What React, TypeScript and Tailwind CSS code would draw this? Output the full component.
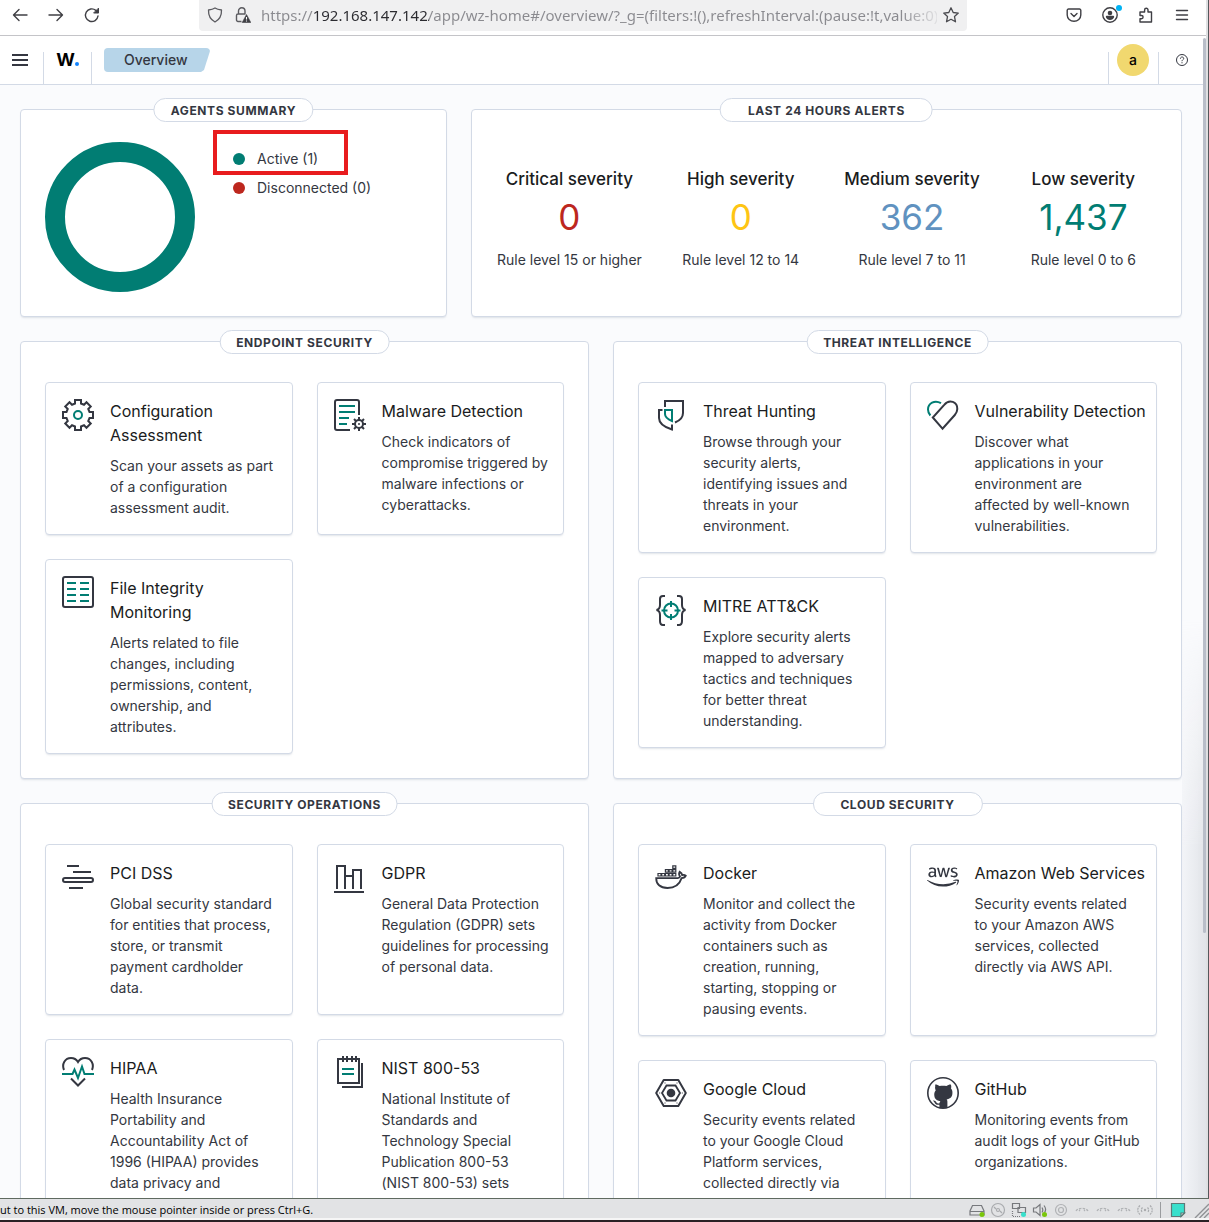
import React from "react";
import type { ReactNode } from "react";
import { FaAws } from "react-icons/fa";

const INK = "#343741";
const TEAL = "#017d73";

/* ---------- icons ---------- */

function gearPath(cx: number, cy: number, outer: number, inner: number, half: number) {
  const points: string[] = [];
  for (let i = 0; i < 8; i++) {
    const a = (i * Math.PI) / 4;
    const tooth = [
      [-half, -inner],
      [-half, -outer],
      [half, -outer],
      [half, -inner],
    ];
    for (const [x, y] of tooth) {
      const px = cx + x * Math.cos(a) - y * Math.sin(a);
      const py = cy + x * Math.sin(a) + y * Math.cos(a);
      points.push(`${px.toFixed(2)} ${py.toFixed(2)}`);
    }
  }
  return `M${points.join("L")}Z`;
}

function Icon({ children }: { children: ReactNode }) {
  return (
    <svg className="size-8 shrink-0" viewBox="0 0 32 32" fill="none" stroke={INK} strokeWidth="2" aria-hidden="true">
      {children}
    </svg>
  );
}

const GearIcon = () => (
  <Icon>
    <path d={gearPath(16, 16, 15, 11.5, 3)} />
    <circle cx="16" cy="16" r="4" stroke={TEAL} />
  </Icon>
);

const MalwareIcon = () => (
  <Icon>
    <path d="M25 16V3a2 2 0 0 0-2-2H3a2 2 0 0 0-2 2v26a2 2 0 0 0 2 2h13" />
    <path d="M5 7h16M5 13h16M5 19h10M5 25h8" stroke={TEAL} />
    <circle cx="25" cy="25" r="4" />
    <path d="M25 18v3M25 29v3M18 25h3M29 25h3M20 20l2.200 2.200M27.800 27.800L30 30M30 20l-2.200 2.200M22.200 27.800L20 30" />
    <circle cx="25" cy="25" r="1" fill={INK} stroke="none" />
  </Icon>
);

const FileIcon = () => (
  <Icon>
    <rect x="1" y="1" width="30" height="30" rx="2" />
    <path d="M5 7h9M18 7h9M5 13h9M18 13h9M5 19h9M18 19h9M5 25h9M18 25h9" stroke={TEAL} />
  </Icon>
);

const HuntIcon = () => (
  <Icon>
    <path d="M10 8V2h18v12c0 5-3 7.500-8 9.500" />
    <path d="M7.500 11H4v8c0 6 6.500 9.500 13 11.500V25.500" />
    <path d="M10 11h7v11c-4.500-1.800-7-3.600-7-7z" stroke={TEAL} />
  </Icon>
);

const HeartIcon = () => (
  <Icon>
    <path d="M15.500 29.700L5.800 18.500 17.200 5.800C22.500-.5 30.500 3 30.300 10c-.1 2.600-1 4.300-2.500 6z" />
    <path d="M14 4.200C7.500.5 1 4.500 1 10.500c0 2.200.8 4.200 2.400 6" stroke={TEAL} />
  </Icon>
);

const MitreIcon = () => (
  <Icon>
    <path d="M10 2H8C6 2 5 3 5 5v6c0 3-1 4.500-3.500 5C4 16.500 5 18 5 21v6c0 2 1 4 3 4h2" />
    <path d="M22 2h2c2 0 3 1 3 3v6c0 3 1 4.500 3.500 5C28 16.500 27 18 27 21v6c0 2-1 4-3 4h-2" />
    <circle cx="16" cy="16.500" r="7" stroke={TEAL} />
    <path d="M16 7v6M16 20v6M6.500 16.500h6M19.500 16.500h6" stroke={TEAL} />
  </Icon>
);

const PciIcon = () => (
  <Icon>
    <path d="M5 5h12M11 11h18M7 27h14" />
    <rect x="1" y="17" width="30" height="4" rx="2" />
  </Icon>
);

const GdprIcon = () => (
  <Icon>
    <path d="M3 28V5h8v23M11 15h8M19 28V9h8v19M0 31h30" />
  </Icon>
);

const HipaaIcon = () => (
  <Icon>
    <path d="M2 14C-.5 8 3 2 9 2c3 0 5.500 1.500 7 4 1.500-2.500 4-4 7-4 6 0 9.500 6 7 12M9 22.500l7 7 7-7" />
    <path d="M0 18h10.500l2-4.500 3.500 8.500 4-11.500 2.500 7.500H32" stroke={TEAL} />
  </Icon>
);

const NistIcon = () => (
  <Icon>
    <path d="M4 3h21v24H4zM9 0v6M13 0v6M18 0v6M22 0v6M28 7v24H8" />
    <path d="M8 13h12M8 18h12" stroke={TEAL} />
  </Icon>
);

const DockerIcon = () => (
  <Icon>
    <path
      d="M1.200 17.200h21.500c1.300-.2 2-.9 2.300-1.700-1.100-1.500-1.200-3.300-.3-4.800 1.600.8 2.400 2 2.500 3.400 1.400-.3 2.700-.1 3.600.6-.6 1.500-2 2.300-4.200 2.400C24.500 23.500 20 27 12.500 27 5 27 1.200 23 1.200 17.200z"
      strokeWidth="1.800"
    />
    <path
      d="M3 12.500h3V15H3zM6.700 12.500h3V15h-3zM10.400 12.500h3V15h-3zM14.100 12.500h3V15h-3zM17.800 12.500h3V15h-3zM10.400 8.700h3v2.500h-3zM14.100 8.700h3v2.500h-3zM17.800 8.700h3v2.500h-3zM17.800 4.900h3v2.500h-3z"
      strokeWidth="1.200"
    />
  </Icon>
);

const AwsIcon = () => <FaAws className="size-8 shrink-0 text-[#343741]" aria-hidden="true" />;

const GoogleCloudIcon = () => (
  <Icon>
    <path d="M8.700 3h14.600L30.800 16l-7.500 13H8.700L1.200 16z" strokeLinejoin="round" />
    <path d="M11.500 8.500h9L25 16l-4.500 7.500h-9L7 16z" strokeWidth="1.800" />
    <circle cx="16" cy="16" r="4.300" fill={INK} stroke="none" />
    <path d="M10 5.500v1M22 5.500v1M4.200 16h1M26.800 16h1M10 25.500v1M22 25.500v1" strokeWidth="1" />
  </Icon>
);

const GithubIcon = () => (
  <Icon>
    <circle cx="16" cy="16" r="15.200" strokeWidth="1.600" />
    <path
      d="M8.200 7.400c1.700 0 3.200.7 4.400 1.600 2.100-.5 4.700-.5 6.800 0 1.200-.9 2.700-1.600 4.400-1.600.6 1.400.6 2.800.2 4 1.200 1.300 1.600 3 1.400 5-.3 4-2.500 5.400-5.800 5.900.6.7.8 1.500.8 2.700V31h-8v-3.300c-2.800.5-4-.4-4.900-2.300-.4-.8-.9-1.300-1.500-1.700 1.600-.4 2.600.5 3.300 1.600.8 1.200 1.700 1.400 3.200 1 .1-1.100.4-1.700.9-2.200-3.300-.5-5.800-2-6.100-5.700-.2-2 .2-3.700 1.400-5-.4-1.200-.9-2.600-.5-4z"
      fill={INK}
      stroke="none"
    />
  </Icon>
);

/* ---------- data ---------- */

type Module = { title: string; text: string; icon: () => ReactNode };

const sections: { title: string; modules: Module[] }[] = [
  {
    title: "Endpoint security",
    modules: [
      { title: "Configuration Assessment", text: "Scan your assets as part of a configuration assessment audit.", icon: GearIcon },
      { title: "Malware Detection", text: "Check indicators of compromise triggered by malware infections or cyberattacks.", icon: MalwareIcon },
      { title: "File Integrity Monitoring", text: "Alerts related to file changes, including permissions, content, ownership, and attributes.", icon: FileIcon },
    ],
  },
  {
    title: "Threat intelligence",
    modules: [
      { title: "Threat Hunting", text: "Browse through your security alerts, identifying issues and threats in your environment.", icon: HuntIcon },
      { title: "Vulnerability Detection", text: "Discover what applications in your environment are affected\u00a0by well-known vulnerabilities.", icon: HeartIcon },
      { title: "MITRE ATT&CK", text: "Explore security alerts mapped to adversary tactics and techniques for better threat understanding.", icon: MitreIcon },
    ],
  },
  {
    title: "Security operations",
    modules: [
      { title: "PCI DSS", text: "Global security standard for entities that process, store, or transmit payment cardholder data.", icon: PciIcon },
      { title: "GDPR", text: "General Data Protection Regulation (GDPR) sets guidelines for processing of personal data.", icon: GdprIcon },
      { title: "HIPAA", text: "Health Insurance Portability and Accountability Act of 1996 (HIPAA) provides data privacy and", icon: HipaaIcon },
      { title: "NIST 800-53", text: "National Institute of Standards and Technology Special Publication 800-53 (NIST\u00a0800-53) sets", icon: NistIcon },
    ],
  },
  {
    title: "Cloud security",
    modules: [
      { title: "Docker", text: "Monitor and collect the activity from Docker containers such as creation, running, starting, stopping or pausing events.", icon: DockerIcon },
      { title: "Amazon Web Services", text: "Security events related to\u00a0your Amazon AWS services, collected directly via AWS API.", icon: AwsIcon },
      { title: "Google Cloud", text: "Security events related to\u00a0your Google Cloud Platform services, collected directly via", icon: GoogleCloudIcon },
      { title: "GitHub", text: "Monitoring events from audit logs of your GitHub organizations.", icon: GithubIcon },
    ],
  },
];

const severities = [
  { name: "Critical severity", count: "0", rule: "Rule level 15 or higher", color: "text-[#bd271e]" },
  { name: "High severity", count: "0", rule: "Rule level 12 to 14", color: "text-[#fec514]" },
  { name: "Medium severity", count: "362", rule: "Rule level 7 to 11", color: "text-[#6092c0]" },
  { name: "Low severity", count: "1,437", rule: "Rule level 0 to 6", color: "text-[#017d73]" },
];

/* ---------- building blocks ---------- */

function Panel({ title, className, children }: { title: string; className: string; children: ReactNode }) {
  return (
    <section className={`relative min-w-0 rounded border border-[#d3dae6] bg-white shadow-[0_2px_2px_-1px_rgba(152,162,179,0.3)] ${className}`}>
      <h2 className="absolute top-0 left-1/2 flex h-6 min-w-[30%] -translate-x-1/2 -translate-y-1/2 items-center justify-center rounded-full border border-[#d3dae6] bg-white px-4 pt-0.5 text-xs font-bold tracking-wider whitespace-nowrap uppercase">
        {title}
      </h2>
      {children}
    </section>
  );
}

function ModuleCard({ module }: { module: Module }) {
  const Glyph = module.icon;
  return (
    <a
      href="#module"
      className="flex gap-4 rounded border border-[#d3dae6] bg-white py-4 pr-2 pl-4 shadow-[0_2px_2px_-1px_rgba(152,162,179,0.3)]"
    >
      <Glyph />
      <div className="min-w-0 flex-1">
        <h3 className="text-base leading-6 text-[#1a1c21]">{module.title}</h3>
        <p className="mt-2 pr-1 text-sm leading-[21px]">{module.text}</p>
      </div>
    </a>
  );
}

/* ---------- browser toolbar ---------- */

function ToolButton({ label, children }: { label: string; children: ReactNode }) {
  return (
    <button type="button" aria-label={label} className="shrink-0">
      <svg className="size-4" viewBox="0 0 16 16" fill="none" stroke="#3f3f44" strokeWidth="1.400" strokeLinecap="round" strokeLinejoin="round">
        {children}
      </svg>
    </button>
  );
}

function BrowserToolbar() {
  return (
    <div className="flex h-9 shrink-0 border-b border-[#c4c4c8] bg-white">
      <div className="flex h-[30px] w-[199px] shrink-0 items-center gap-5 pl-3">
        <ToolButton label="Back">
          <path d="M15 8H1.500M7 2.500L1.500 8 7 13.500" />
        </ToolButton>
        <ToolButton label="Forward">
          <path d="M1 8h13.500M9 2.500L14.500 8 9 13.500" />
        </ToolButton>
        <ToolButton label="Reload">
          <path d="M14 9a6.300 6.300 0 1 1-2.200-5.600L14 5.500" />
          <path d="M14.500 1.500V6H10z" fill="#3f3f44" strokeWidth="1" />
        </ToolButton>
      </div>
      <div className="flex h-[31px] min-w-0 flex-1 items-center rounded-b bg-[#f0f0f1] px-2 pb-0.5">
        <svg className="size-4 shrink-0" viewBox="0 0 16 16" fill="none" stroke="#5b5b60" strokeWidth="1.300" aria-hidden="true">
          <path d="M8 1c2 1.300 4 1.700 6.500 2 .2 5.500-1.800 9.500-6.500 12C3.300 12.500 1.300 8.500 1.500 3 4 2.700 6 2.300 8 1z" strokeLinejoin="round" />
        </svg>
        <svg className="ml-3 size-4 shrink-0" viewBox="0 0 16 16" fill="none" stroke="#5b5b60" strokeWidth="1.400" aria-hidden="true">
          <path d="M6.500 14.500H3A1.500 1.500 0 0 1 1.500 13V8.500A1.500 1.500 0 0 1 3 7h7.500M3.500 7V4a3.200 3.200 0 0 1 6.500 0v3" />
          <path d="M11.500 7.500l4.300 8H7.200z" fill="#3f3f44" stroke="#3f3f44" strokeWidth=".6" strokeLinejoin="round" />
          <path d="M11.500 10v2.600M11.500 13.500v1" stroke="#fff" strokeWidth="1.100" />
        </svg>
        <input
          type="text"
          aria-label="Address"
          readOnly
          value="https://192.168.147.142/app/wz-home#/overview/?_g=(filters:!(),refreshInterval:(pause:!t,value:0)"
          className="ml-2.5 h-6 min-w-0 flex-1 bg-[linear-gradient(90deg,#8a8a8f_52px,#2b2b30_52px,#2b2b30_168px,#8a8a8f_168px,#8a8a8f_640px,#e0e0e2_676px)] bg-clip-text font-['Noto_Sans',sans-serif] text-[15px] leading-6 text-transparent outline-none"
        />
        <button type="button" aria-label="Bookmark this page" className="ml-1.5 shrink-0">
          <svg className="size-4" viewBox="0 0 16 16" fill="none" stroke="#4a4a4f" strokeWidth="1.300" strokeLinejoin="round">
            <path d="M8 .8l2.200 4.700 5.100.6-3.800 3.500 1 5.200L8 12.300l-4.500 2.500 1-5.200L.7 6.100l5.100-.6z" />
          </svg>
        </button>
      </div>
      <div className="flex h-[30px] w-[239px] shrink-0 items-center justify-end gap-5 pr-4">
        <ToolButton label="Save to Pocket">
          <path d="M2.500 2h11a1.300 1.300 0 0 1 1.300 1.300V8A6.800 6.300 0 0 1 1.200 8V3.300A1.300 1.300 0 0 1 2.500 2zM5 6.500L8 9.500l3-3" />
        </ToolButton>
        <div className="relative flex">
          <ToolButton label="Account">
            <circle cx="8" cy="8" r="7.200" />
            <circle cx="8" cy="6" r="2.300" fill="#3f3f44" stroke="none" />
            <path d="M3.800 10c0-.8.500-1.200 1.200-1.200h6c.7 0 1.200.4 1.200 1.200-.7 2-2.200 3-4.200 3s-3.500-1-4.200-3z" fill="#3f3f44" stroke="none" />
          </ToolButton>
          <span className="absolute -top-0.5 -right-1 size-1.5 rounded-full bg-[#00b3f4]" />
        </div>
        <ToolButton label="Extensions">
          <path d="M2 15h11.500V5H10V3a1.700 1.700 0 0 0-3.400 0v2H2v3.500h1.500a1.600 1.600 0 0 1 0 3.200H2z" />
        </ToolButton>
        <ToolButton label="Application menu">
          <path d="M2.500 3.500h11M2.500 8h11M2.500 12.500h11" />
        </ToolButton>
      </div>
    </div>
  );
}

/* ---------- application header ---------- */

function AppHeader() {
  return (
    <header className="flex h-[49px] shrink-0 items-stretch border-b border-[#d3dae6] bg-white">
      <button type="button" aria-label="Toggle navigation" className="flex w-[43px] items-center pl-3">
        <svg className="size-4" viewBox="0 0 16 16" stroke={INK} strokeWidth="2" aria-hidden="true">
          <path d="M0 3h16M0 8h16M0 13h16" />
        </svg>
      </button>
      <span className="mt-4 w-px bg-[#d3dae6]" />
      <a href="#home" className="flex w-[47px] items-center justify-center text-lg leading-6 font-bold text-black">
        W<span className="mt-2 size-1 rounded-full bg-[#1183ff]" />
      </a>
      <span className="mt-4 w-px bg-[#d3dae6]" />
      <nav aria-label="Breadcrumb" className="ml-3 flex items-center">
        <a
          href="#overview"
          className="flex h-6 w-[106px] items-center rounded bg-[#b7d5e9] pl-5 text-sm font-medium [clip-path:polygon(0_0,100%_0,100%_3px,calc(100%-6px)_22px,calc(100%-9px)_100%,0_100%)]"
        >
          Overview
        </a>
      </nav>
      <div className="ml-auto flex">
        <span className="mt-4 w-px bg-[#d3dae6]" />
        <button type="button" aria-label="Account menu" className="flex w-[49px] items-center justify-center pr-px">
          <span className="flex size-8 items-center justify-center rounded-full bg-[#f1d86f] text-sm font-medium text-black">a</span>
        </button>
        <span className="mt-4 w-px bg-[#d3dae6]" />
        <button type="button" aria-label="Help" className="flex w-[47px] items-center justify-center pr-px">
          <svg className="size-3" viewBox="0 0 12 12" fill="none" stroke={INK} aria-hidden="true">
            <circle cx="6" cy="6" r="5.500" />
            <path d="M4.400 4.700c0-2.200 3.300-2.200 3.300-.2C7.700 5.700 6 5.700 6 7.200M6 8.200v1.100" />
          </svg>
        </button>
      </div>
    </header>
  );
}

/* ---------- VM status bar ---------- */

function Device({ label, children }: { label: string; children: ReactNode }) {
  return (
    <button type="button" aria-label={label} className="shrink-0">
      <svg className="size-4" viewBox="0 0 16 16" fill="none" stroke="#77797d" strokeWidth="1.200">
        {children}
      </svg>
    </button>
  );
}

const UsbDevice = () => (
  <Device label="USB device">
    <path d="M2 9c2-3.500 10-3.500 12 0M5 9l1-1M11 9l-1-1" stroke="#b0b2b5" strokeDasharray="2.500 1.200" />
  </Device>
);

function StatusBar() {
  return (
    <footer className="shrink-0 border-t border-[#5f6a60] bg-[#e2e3e5]">
      <div className="flex h-[19px] items-center justify-between overflow-hidden">
        <p className="pt-0.5 font-['Open_Sans',sans-serif] text-[11px] leading-4 whitespace-nowrap text-black">
          ut to this VM, move the mouse pointer inside or press Ctrl+G.
        </p>
        <div className="flex h-full items-center gap-[5px] pt-0.5">
          <Device label="Hard disk">
            <path d="M3.500 3.500h9L15 9v4H1V9zM1 9.500h14" />
            <circle cx="13" cy="12.500" r="2.500" fill="#7ac60b" stroke="none" />
          </Device>
          <Device label="CD drive">
            <circle cx="8" cy="8" r="6.500" stroke="#a9abae" />
            <circle cx="8" cy="8" r="1.500" stroke="#a9abae" />
            <path d="M4 5l2 2M10 9l2 2" stroke="#a9abae" />
          </Device>
          <Device label="Network adapter">
            <path d="M1.500 1.500h7v5h-7zM7 5.500h7.500v5H7z" />
            <path d="M1.500 9v5.500H10" strokeDasharray="1 1" />
            <circle cx="12.500" cy="12.500" r="2.500" fill="#38e0cc" stroke="none" />
          </Device>
          <Device label="Sound card">
            <path d="M1.500 6H4l4-3.500v11L4 10H1.500zM10 5.500c1 1.500 1 3.500 0 5M12 3.500c2 2.500 2 5 .5 7" />
            <circle cx="12.500" cy="12.500" r="2.500" fill="#7ac60b" stroke="none" />
          </Device>
          <Device label="Camera">
            <circle cx="8" cy="8" r="5.500" stroke="#b0b2b5" />
            <circle cx="8" cy="8" r="2.500" stroke="#b0b2b5" />
          </Device>
          <UsbDevice />
          <UsbDevice />
          <UsbDevice />
          <Device label="Wireless">
            <path d="M3 3.500c-3 3-3 6 0 9M13 3.500c3 3 3 6 0 9M5.500 5.500c-1.500 1.500-1.500 3.500 0 5M10.500 5.500c1.500 1.500 1.500 3.500 0 5" stroke="#a9abae" strokeDasharray="2 .8" />
            <circle cx="8" cy="8" r="1.200" fill="#a9abae" stroke="none" />
          </Device>
          <span className="mr-1 ml-0.5 h-4 w-px bg-[#9a9c9f]" />
          <Device label="Message log">
            <path d="M1.500 1.500h13V11L11 14.500H1.500z" fill="#38e0cc" stroke="#5d7a78" />
            <path d="M14.500 11H11v3.500z" fill="#fff" stroke="#5d7a78" />
          </Device>
          <svg className="ml-0.5 size-4" viewBox="0 0 16 16" stroke="#8f9194" strokeWidth="1.400" aria-hidden="true">
            <path d="M2 16L16 2M6.500 16L16 6.500M11 16l5-5" />
          </svg>
        </div>
      </div>
      <div className="h-0.5 bg-[#f6f6f6]" />
      <div className="h-0.5 bg-[#2a2024]" />
    </footer>
  );
}

/* ---------- page ---------- */

export default function App() {
  return (
    <div className="flex h-screen flex-col overflow-hidden bg-white font-['Inter',sans-serif] text-[#343741]">
      <div className="flex min-h-0 flex-1 flex-col border-r border-[#55585c]">
        <div className="flex min-h-0 flex-1 flex-col border-r-2 border-[#dfe0e2]">
          <BrowserToolbar />
          <div className="relative flex min-h-0 flex-1 flex-col">
            <AppHeader />
            <main className="min-h-0 flex-1 overflow-hidden bg-[#fafbfd] pt-6 pr-6 pl-5">
              <div className="flex flex-col gap-6">
                <div className="grid grid-cols-[3fr_5fr] gap-6">
                  <Panel title="Agents summary" className="px-6 pt-8 pb-6">
                    <div className="flex gap-[38px]">
                      <svg className="size-[150px] shrink-0" viewBox="0 0 150 150" fill="none" role="img" aria-label="Agents by status">
                        <circle cx="75" cy="75" r="65" stroke={TEAL} strokeWidth="20" />
                      </svg>
                      <ul className="flex flex-col gap-2 pt-1.5 text-sm leading-[21px]">
                        <li className="relative flex items-center gap-3">
                          <span className="size-3 rounded-full bg-[#017d73]" />
                          Active (1)
                          <span className="absolute -top-[18px] -left-5 h-[45px] w-[135px] border-4 border-[#e81c1e]" />
                        </li>
                        <li className="flex items-center gap-3">
                          <span className="size-3 rounded-full bg-[#bd271e]" />
                          Disconnected (0)
                        </li>
                      </ul>
                    </div>
                  </Panel>
                  <Panel title="Last 24 hours alerts" className="px-3 pt-[57px]">
                    <dl className="grid grid-cols-4 text-center">
                      {severities.map((s) => (
                        <div key={s.name}>
                          <dt className="text-[17px] leading-6 font-medium text-[#1a1c21]">{s.name}</dt>
                          <dd className={`mt-0.5 text-[35px] leading-[48px] ${s.color}`}>{s.count}</dd>
                          <dd className="mt-2 text-sm leading-[21px]">{s.rule}</dd>
                        </div>
                      ))}
                    </dl>
                  </Panel>
                </div>
                <div className="grid grid-cols-2 gap-6">
                  {sections.map((section) => (
                    <Panel key={section.title} title={section.title} className="px-6 pt-10 pb-6">
                      <div className="grid grid-cols-2 gap-6">
                        {section.modules.map((m) => (
                          <ModuleCard key={m.title} module={m} />
                        ))}
                      </div>
                    </Panel>
                  ))}
                </div>
              </div>
            </main>
            <span className="pointer-events-none absolute right-0 bottom-0 h-1/2 w-6 bg-linear-to-r from-[#e9ebf1]/40 to-[#c9ccd3]/50 mask-t-from-60%" />
            <span className="absolute top-0.5 right-0 h-[77%] w-[3px] rounded-full bg-[#b9bec9]" />
          </div>
        </div>
      </div>
      <StatusBar />
    </div>
  );
}
